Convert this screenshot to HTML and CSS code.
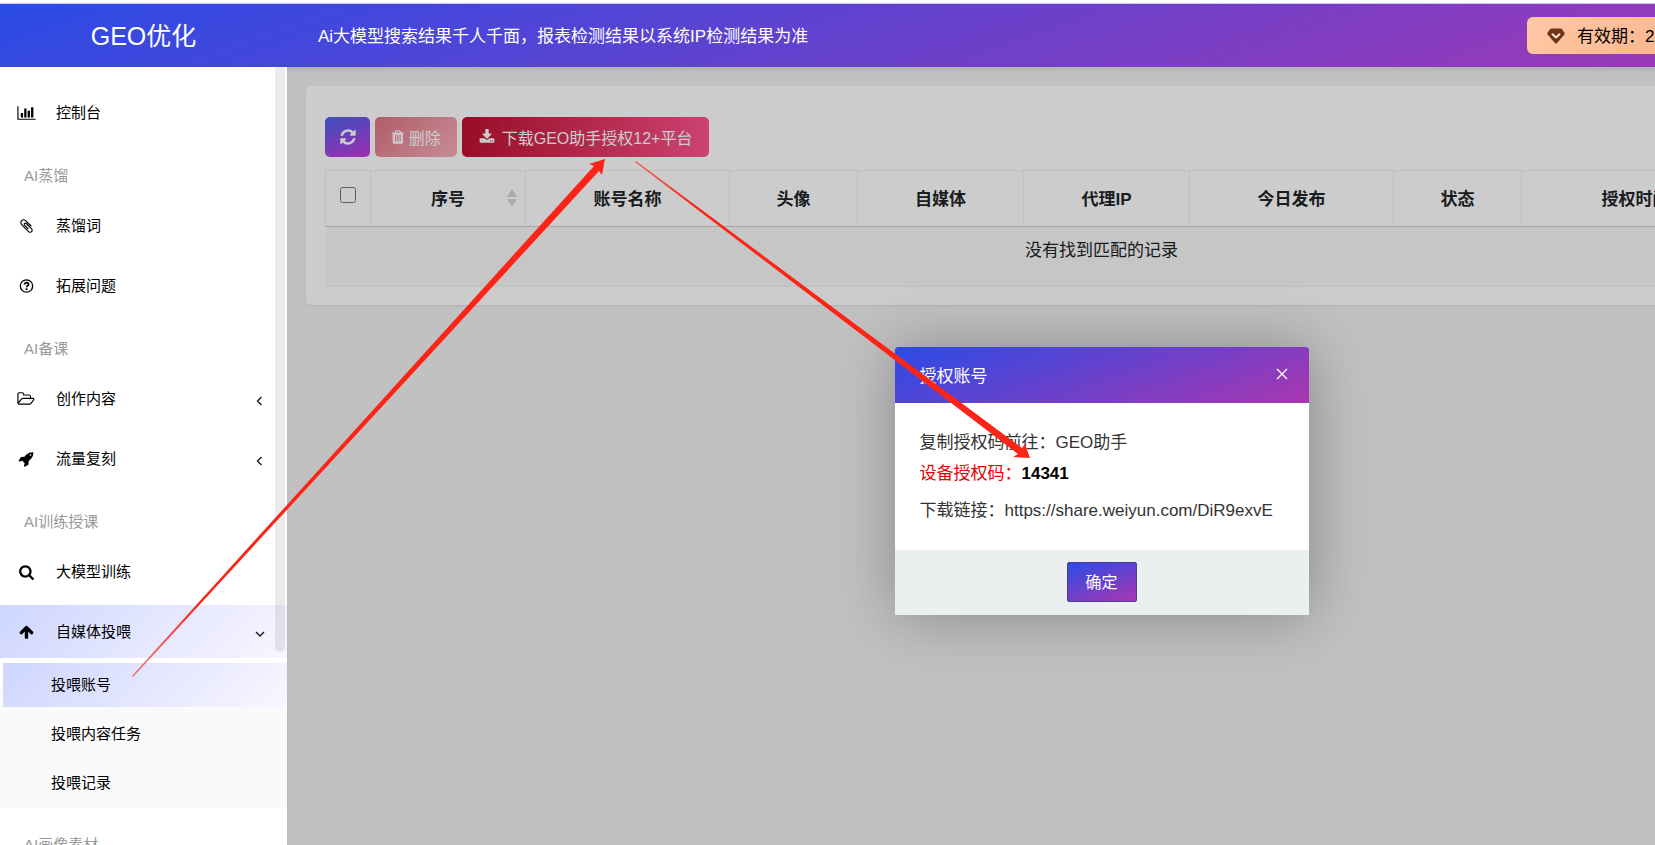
FILE: index.html
```html
<!DOCTYPE html>
<html lang="zh-CN">
<head>
    <meta charset="UTF-8">
    <meta name="viewport" content="width=device-width, initial-scale=1.0">
    <title>GEO优化</title>
    <link rel="stylesheet" href="styles.css">
</head>
<body>
<header class="topbar">
    <h1 class="brand">GEO优化</h1>
    <p class="notice">Ai大模型搜索结果千人千面，报表检测结果以系统IP检测结果为准</p>
    <div class="expiry">
        <svg class="gem" viewBox="0 0 18 16"><path fill="#6b3714" d="M4.500 0.500h9q.8 0 1.300.6l2.700 3.700q.6.900-.1 1.800l-7.300 8.400q-1.100 1.200-2.200 0L.600 6.600q-.7-.9-.1-1.800L3.200 1.100Q3.700.5 4.500.5z"/><path d="M5.500 6.200L9 9.500l3.500-3.300" fill="none" stroke="#ffe3d0" stroke-width="2" stroke-linecap="round" stroke-linejoin="round"/></svg>
        <span>有效期：2</span>
    </div>
</header>
<div class="layout">
    <nav class="sidebar">
        <a class="item" href="#">
            <svg class="icon wide" viewBox="0 0 2048 1792"><path d="M640 896v512h-256v-512h256zm384-512v1024h-256v-1024h256zm1024 1152v128h-2048v-1536h128v1408h1920zm-640-896v768h-256v-768h256zm384-384v1152h-256v-1152h256z"/></svg>
            <span>控制台</span>
        </a>
        <div class="section">AI蒸馏</div>
        <a class="item" href="#">
            <svg class="icon" viewBox="0 0 1792 1792"><path d="M1596 1385q0 117-79 196t-196 79q-135 0-235-100l-777-776q-113-115-113-271 0-159 110-270t269-111q158 0 273 113l605 606q10 10 10 22 0 16-30.500 46.500t-46.500 30.500q-13 0-23-10l-606-607q-79-77-181-77-106 0-179 75t-73 181q0 105 76 181l776 777q63 63 145 63 64 0 106-42t42-106q0-82-63-145l-581-581q-26-24-60-24-29 0-48 19t-19 48q0 32 25 59l410 410q10 10 10 22 0 16-31 47t-47 31q-12 0-22-10l-410-410q-63-61-63-149 0-82 57-139t139-57q88 0 149 63l581 581q100 98 100 235z"/></svg>
            <span>蒸馏词</span>
        </a>
        <a class="item" href="#">
            <svg class="icon" viewBox="0 0 16 16"><g fill="none" stroke="#000"><circle cx="8" cy="8" r="6.200" stroke-width="1.300"/><path d="M5.800 6.600Q6.200 4.700 8 4.700q2.100 0 2.100 1.700c0 1.400-2 1.300-2 2.800" stroke-width="1.700"/></g><path d="M7.100 10.300h1.900v1.700H7.100z"/></svg>
            <span>拓展问题</span>
        </a>
        <div class="section">AI备课</div>
        <a class="item" href="#">
            <svg class="icon wide" viewBox="0 0 1920 1792"><path d="M1717 931q0-35-53-35h-1088q-40 0-85.500 21.500t-71.500 52.500l-294 363q-18 24-18 40 0 35 53 35h1088q40 0 86-22t71-53l294-363q18-22 18-39zm-1141-163h768v-160q0-40-28-68t-68-28h-576q-40 0-68-28t-28-68v-64q0-40-28-68t-68-28h-320q-40 0-68 28t-28 68v853l256-315q44-53 116-87.500t140-34.500zm1269 163q0 62-46 120l-295 363q-43 53-116 87.500t-140 34.500h-1088q-92 0-158-66t-66-158v-960q0-92 66-158t158-66h320q92 0 158 66t66 158v32h544q92 0 158 66t66 158v160h192q54 0 99 24.500t67 70.500q15 32 15 68z"/></svg>
            <span>创作内容</span>
            <svg class="chevron" viewBox="0 0 10 10"><path d="M6.500 1L2.500 5l4 4"/></svg>
        </a>
        <a class="item" href="#">
            <svg class="icon" viewBox="0 0 1792 1792"><path d="M1440 448q0-40-28-68t-68-28-68 28-28 68 28 68 68 28 68-28 28-68zm224-288q0 249-75.500 430.500t-253.500 360.500q-81 80-195 176l-20 379q-2 16-16 26l-384 224q-7 4-16 4-12 0-23-9l-64-64q-13-14-8-32l85-276-281-281-276 85q-3 1-9 1-14 0-23-9l-64-64q-17-19-5-39l224-384q10-14 26-16l379-20q96-114 176-195 188-187 358-258t431-71q14 0 24 9.500t10 22.500z"/></svg>
            <span>流量复刻</span>
            <svg class="chevron" viewBox="0 0 10 10"><path d="M6.500 1L2.500 5l4 4"/></svg>
        </a>
        <div class="section">AI训练授课</div>
        <a class="item" href="#">
            <svg class="icon" viewBox="0 0 1792 1792"><path d="M1216 832q0-185-131.500-316.500t-316.500-131.500-316.500 131.500-131.500 316.500 131.500 316.500 316.500 131.500 316.500-131.500 131.500-316.500zm512 832q0 52-38 90t-90 38q-54 0-90-38l-343-342q-179 124-399 124-143 0-273.500-55.500t-225-150-150-225-55.500-273.500 55.500-273.500 150-225 225-150 273.500-55.500 273.500 55.500 225 150 150 225 55.500 273.500q0 220-124 399l343 343q37 37 37 90z"/></svg>
            <span>大模型训练</span>
        </a>
        <a class="item open" href="#">
            <svg class="icon" viewBox="0 0 1792 1792"><path d="M1675 971q0 51-37 90l-75 75q-38 38-91 38-54 0-90-38l-294-293v704q0 52-37.500 84.500t-90.500 32.500h-128q-53 0-90.500-32.500t-37.500-84.500v-704l-294 293q-36 38-90 38t-90-38l-75-75q-38-38-38-90 0-53 38-91l651-651q35-37 90-37 54 0 91 37l651 651q37 39 37 91z"/></svg>
            <span>自媒体投喂</span>
            <svg class="chevron" viewBox="0 0 10 10"><path d="M1 3l4 4 4-4"/></svg>
        </a>
        <div class="submenu">
            <a class="subitem active" href="#">投喂账号</a>
            <a class="subitem" href="#">投喂内容任务</a>
            <a class="subitem" href="#">投喂记录</a>
        </div>
        <div class="section">AI画像素材</div>
        <div class="scroll-thumb"></div>
    </nav>
    <main class="content">
        <section class="card">
            <div class="toolbar">
                <button class="btn btn-refresh" aria-label="刷新">
                    <svg viewBox="0 0 1792 1792"><path d="M1639 1056q0 5-1 7-64 268-268 434.500t-478 166.500q-146 0-282.500-55t-243.500-157l-129 129q-19 19-45 19t-45-19-19-45v-448q0-26 19-45t45-19h448q26 0 45 19t19 45-19 45l-137 137q71 66 161 102t187 36q134 0 250-65t186-179q11-17 53-117 8-23 30-23h192q13 0 22.500 9.500t9.500 22.500zm25-800v448q0 26-19 45t-45 19h-448q-26 0-45-19t-19-45 19-45l138-138q-148-137-349-137-134 0-250 65t-186 179q-11 17-53 117-8 23-30 23h-199q-13 0-22.500-9.500t-9.500-22.500v-7q65-268 270-434.500t480-166.500q146 0 284 55.500t245 156.500l130-129q19-19 45-19t45 19 19 45z"/></svg>
                </button>
                <button class="btn btn-delete">
                    <svg viewBox="128 0 1536 1792"><path d="M704 1376v-704q0-14-9-23t-23-9h-64q-14 0-23 9t-9 23v704q0 14 9 23t23 9h64q14 0 23-9t9-23zm256 0v-704q0-14-9-23t-23-9h-64q-14 0-23 9t-9 23v704q0 14 9 23t23 9h64q14 0 23-9t9-23zm256 0v-704q0-14-9-23t-23-9h-64q-14 0-23 9t-9 23v704q0 14 9 23t23 9h64q14 0 23-9t9-23zm-544-992h448l-48-117q-7-9-17-11h-317q-10 2-17 11zm928 32v64q0 14-9 23t-23 9h-96v948q0 83-47 143.500t-113 60.500h-832q-66 0-113-58.500t-47-141.500v-952h-96q-14 0-23-9t-9-23v-64q0-14 9-23t23-9h309l70-167q15-37 54-63t79-26h320q40 0 79 26t54 63l70 167h309q14 0 23 9t9 23z"/></svg>
                    删除
                </button>
                <button class="btn btn-download">
                    <svg viewBox="0 0 1792 1792"><path d="M1344 1344q0-26-19-45t-45-19-45 19-19 45 19 45 45 19 45-19 19-45zm256 0q0-26-19-45t-45-19-45 19-19 45 19 45 45 19 45-19 19-45zm128-224v320q0 40-28 68t-68 28h-1472q-40 0-68-28t-28-68v-320q0-40 28-68t68-28h465l135 136q58 56 136 56t136-56l136-136h464q40 0 68 28t28 68zm-325-569q17 41-14 70l-448 448q-18 19-45 19t-45-19l-448-448q-31-29-14-70 17-39 59-39h256v-448q0-26 19-45t45-19h256q26 0 45 19t19 45v448h256q42 0 59 39z"/></svg>
                    下载GEO助手授权12+平台
                </button>
            </div>
            <table class="accounts">
                <colgroup>
                    <col class="col-check"><col class="col-id"><col class="col-name"><col class="col-small"><col class="col-media"><col class="col-media"><col class="col-name"><col class="col-small"><col class="col-time"><col class="col-small">
                </colgroup>
                <thead>
                <tr>
                    <th><input type="checkbox" aria-label="全选"></th>
                    <th class="sortable"><span>序号</span><svg class="sort" viewBox="0 0 10 18"><path d="M5 0l5 8H0zM0 10h10l-5 8z"/></svg></th>
                    <th>账号名称</th>
                    <th>头像</th>
                    <th>自媒体</th>
                    <th>代理IP</th>
                    <th>今日发布</th>
                    <th>状态</th>
                    <th>授权时间</th>
                    <th></th>
                </tr>
                </thead>
                <tbody>
                <tr>
                    <td colspan="10">没有找到匹配的记录</td>
                </tr>
                </tbody>
            </table>
        </section>
        <div class="shade"></div>
        <div class="dialog" role="dialog" aria-labelledby="dialog-title">
            <div class="dialog-head">
                <h2 id="dialog-title">授权账号</h2>
                <button class="close" aria-label="关闭">
                    <svg viewBox="0 0 12 12"><path d="M1 1l10 10M11 1L1 11"/></svg>
                </button>
            </div>
            <div class="dialog-body">
                <p>复制授权码前往：GEO助手</p>
                <p><span class="code-label">设备授权码：</span><b>14341</b></p>
                <p class="link-line">下载链接：https://share.weiyun.com/DiR9exvE</p>
            </div>
            <div class="dialog-foot">
                <button class="confirm">确定</button>
            </div>
        </div>
    </main>
</div>
<!-- guide arrows: menu -> download button -> code -->
<svg class="arrows" width="1655" height="845" viewBox="0 0 1655 845">
    <defs>
        <linearGradient id="fadeA" gradientUnits="userSpaceOnUse" x1="133" y1="676" x2="200" y2="603">
            <stop offset="0" stop-color="#fb2417" stop-opacity="0.600"/>
            <stop offset="1" stop-color="#fb2417"/>
        </linearGradient>
        <linearGradient id="fadeB" gradientUnits="userSpaceOnUse" x1="635" y1="161" x2="700" y2="210">
            <stop offset="0" stop-color="#fb2417" stop-opacity="0.600"/>
            <stop offset="1" stop-color="#fb2417"/>
        </linearGradient>
    </defs>
    <path fill="url(#fadeA)" d="M132 676l1 1L599 171l3 4 3-16-16 5 5 2z"/>
    <path fill="url(#fadeB)" d="M636 161L1022 448l3-4 5 14-17-1 5-3L635 162z"/>
</svg>
</body>
</html>
```
FILE: styles.css
```css
* {
    box-sizing: border-box;
}

html {
    overflow: hidden;
}

body {
    margin: 0;
    padding-top: 3px;
    height: 100vh;
    min-width: 1916px;
    display: flex;
    flex-direction: column;
    font-family: "Liberation Sans", "Noto Sans CJK SC", sans-serif;
    font-size: 17px;
    color: #212529;
    background: #fff;
}

h1, h2, p {
    margin: 0;
    font-weight: normal;
}

a {
    color: #000;
    text-decoration: none;
}

button {
    font-family: inherit;
    font-size: 16px;
    color: #fff;
    cursor: pointer;
}

/* Top bar */
.topbar {
    display: flex;
    align-items: center;
    height: 64px;
    flex: none;
    padding-right: 139px;
    border-top: 1px solid #c9c6ee;
    background: linear-gradient(160deg, #2b4be6, #a937b0);
    color: #fff;
}

.brand {
    width: 287px;
    padding-bottom: 4px;
    font-size: 25px;
    text-align: center;
}

.notice {
    padding: 0 0 3px 31px;
}

.expiry {
    display: flex;
    align-items: center;
    gap: 12px;
    width: 250px;
    height: 37px;
    margin-left: auto;
    padding: 0 0 2px 20px;
    border-radius: 6px;
    background: linear-gradient(135deg, #ffc9a6, #f5ab7c);
    color: #000;
}

.gem {
    width: 18px;
    height: 16px;
    margin-top: 2px;
}

.layout {
    display: flex;
    flex: 1;
    min-height: 0;
}

/* Sidebar */
.sidebar {
    position: relative;
    width: 287px;
    flex: none;
    padding-top: 19px;
    overflow: hidden;
    font-size: 15px;
}

.item {
    display: flex;
    align-items: center;
    height: 53px;
    margin-bottom: 7px;
    padding: 0 22px 0 17px;
}

.item.open {
    margin-bottom: 0;
    background: linear-gradient(135deg, #ced6ff, #f9f6ff);
}

.item span {
    flex: 1;
    padding: 0 0 3px 20px;
}

.icon {
    width: 19px;
    height: 16px;
}

.chevron {
    width: 10px;
    height: 10px;
    margin-top: 5px;
    fill: none;
    stroke: #111;
    stroke-width: 1.3;
}

.section {
    height: 53px;
    padding: 6px 0 0 24px;
    line-height: 48px;
    color: #999;
}

.submenu {
    display: flow-root;
    margin-bottom: 7px;
    padding-bottom: 3px;
    background: linear-gradient(#fff 30px, #fafafa 30px);
}

.subitem {
    display: block;
    height: 44px;
    margin-top: 5px;
    padding-left: 51px;
    line-height: 43px;
}

.subitem.active {
    margin-left: 3px;
    padding-left: 48px;
    background: linear-gradient(135deg, #ced6ff, #f9f6ff);
}

.scroll-thumb {
    position: absolute;
    top: 0;
    right: 2px;
    width: 10px;
    height: 585px;
    border-radius: 0 0 5px 5px;
    background: rgba(0, 0, 0, 0.08);
}

/* Content */
.content {
    position: relative;
    flex: 1;
    padding: 19px;
    background: #f2f2f2;
}

.card {
    padding: 31px 19px 18px;
    border-radius: 5px;
    background: #fff;
    box-shadow: 0 1px 2px rgba(0, 0, 0, 0.1);
}

.toolbar {
    display: flex;
    gap: 5px;
    margin-bottom: 13px;
}

.btn {
    display: flex;
    align-items: center;
    justify-content: center;
    gap: 4px;
    height: 40px;
    padding: 0 15px 1px;
    border: 1px solid transparent;
    border-radius: 5px;
    background-origin: border-box;
}

.btn svg {
    height: 16px;
    fill: #fff;
}

.btn-refresh {
    width: 45px;
    padding: 0;
    background-image: linear-gradient(160deg, #4a62ee, #c63bdc);
}

.btn-refresh svg {
    height: 18px;
}

.btn-delete {
    background-image: linear-gradient(135deg, #de7480, #f8b0be);
}

.btn-download {
    gap: 7px;
    padding: 0 16px 1px;
    background-image: linear-gradient(100deg, #bd1030, #ff568f);
}

.accounts {
    width: 100%;
    table-layout: fixed;
    border-collapse: collapse;
}

.col-check { width: 45px; }
.col-id { width: 155px; }
.col-name { width: 204px; }
.col-small { width: 128px; }
.col-media { width: 166px; }
.col-time { width: 228px; }

.accounts th {
    height: 56px;
    padding: 0 0 3px;
    border: 1px solid #f0f0f0;
    border-bottom: 1px solid #d0d0d0;
}

.accounts input {
    width: 16px;
    height: 16px;
    margin: 0;
}

.sortable {
    position: relative;
}

.sort {
    position: absolute;
    top: 18px;
    right: 8px;
    width: 10px;
    height: 18px;
    fill: #d6d6d6;
}

.accounts td {
    height: 60px;
    padding: 11px 0 0;
    line-height: 26px;
    text-align: center;
    vertical-align: top;
    background: #f8f8f8;
    border-bottom: 1px solid #f0f0f0;
}

.shade {
    position: absolute;
    top: 0;
    right: 0;
    bottom: 0;
    left: 0;
    background: rgba(0, 0, 0, 0.2);
    box-shadow: inset 0 4px 5px -2px rgba(0, 0, 0, 0.1);
}

/* Dialog */
.dialog {
    position: absolute;
    top: 280px;
    left: 50%;
    width: 414px;
    margin-left: -207px;
    border-radius: 3px 3px 0 0;
    background: #fff;
    color: #333;
    box-shadow: 1px 1px 62px rgba(0, 0, 0, 0.3);
}

.dialog-head {
    display: flex;
    align-items: center;
    justify-content: space-between;
    height: 56px;
    padding: 0 21px 2px 25px;
    border-radius: 3px 3px 0 0;
    background: linear-gradient(160deg, #2b4be6, #a937b0);
    color: #fff;
}

.dialog-head h2 {
    font-size: 17px;
}

.close {
    display: flex;
    padding: 0;
    border: 0;
    background: none;
}

.close svg {
    width: 12px;
    height: 12px;
    fill: none;
    stroke: #fff;
    stroke-width: 1.4;
}

.dialog-body {
    padding: 24px 25px;
    line-height: 31px;
}

.code-label {
    color: #e60000;
}

.dialog-body b {
    color: #000;
}

.link-line {
    margin-top: 6px;
}

.dialog-foot {
    padding: 12px 12px 13px;
    text-align: center;
    background: #eceff0;
}

.confirm {
    width: 70px;
    height: 40px;
    padding: 0 0 2px;
    border: 1px solid #4a3f8c;
    border-radius: 2px;
    background: linear-gradient(160deg, #2b4be6, #a937b0);
}

.arrows {
    position: absolute;
    top: 0;
    left: 0;
    pointer-events: none;
}
```
